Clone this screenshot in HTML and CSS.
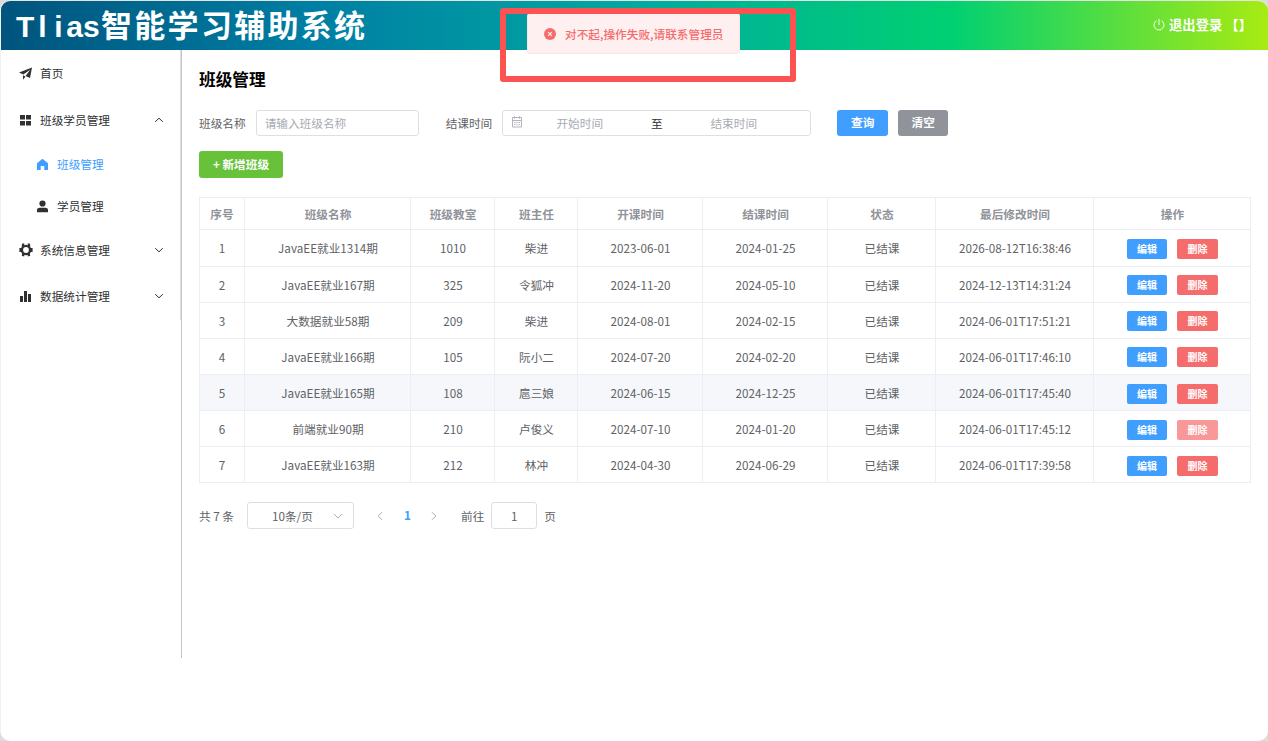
FILE: index.html
```
<!DOCTYPE html>
<html lang="zh-CN">
<head>
    <meta charset="UTF-8">
    <meta name="viewport" content="width=device-width, initial-scale=1.0">
    <title>Tlias智能学习辅助系统</title>
    <link rel="stylesheet" href="styles.css">
</head>
<body>
    <div class="window">
        <div class="header">
            <span class="title"><span class="title-en">T<span class="thin">l</span><span class="thin">i</span>as</span>智能学习辅助系统</span>
            <a class="logout">
                <svg class="power" viewBox="0 0 12 12"><path d="M3.6 1.6a5 5 0 1 0 4.8 0M6 0v6" fill="none" stroke="#fff" stroke-width="0.9"/></svg>
                <span>退出登录</span><span class="user">【】</span>
            </a>
        </div>
        <div class="container">
            <div class="aside">
                <div class="menu">
                    <div class="menu-item home">
                        <svg class="icon" viewBox="0 0 13 13"><path d="M0 5.5 13 .5 11 11 6.6 8.9 11.2 2.8 4.3 7.5zM4 8.3l2.5 1.3L4 12.8z"/></svg>
                        <span>首页</span>
                    </div>
                    <div class="menu-item">
                        <svg class="icon" viewBox="0 0 13 13"><path d="M1 1h5v4.500H1zM7 1h5v4.500H7zM1 7h5v4.500H1zM7 7h5v4.500H7z"/></svg>
                        <span>班级学员管理</span>
                        <svg class="arrow" viewBox="0 0 10 6"><path d="M1.2 4.8 5 1.2l3.8 3.6"/></svg>
                    </div>
                    <div class="menu-item sub active">
                        <svg class="icon" viewBox="0 0 13 13"><path d="M6.500.8 1 5.200V12h3.700V8h3.600v4H12V5.200z"/></svg>
                        <span>班级管理</span>
                    </div>
                    <div class="menu-item sub">
                        <svg class="icon" viewBox="0 0 13 13"><circle cx="6.5" cy="3.5" r="3.1"/><path d="M1 12.200V10c0-1.500 1.200-2.300 2.700-2.300h5.600C10.800 7.700 12 8.500 12 10v2.200z"/></svg>
                        <span>学员管理</span>
                    </div>
                    <div class="menu-item">
                        <svg class="icon gear" viewBox="0 0 14 14"><circle cx="7" cy="7" r="4.1" fill="none" stroke="#303133" stroke-width="2.4"/><path d="M8.600.6h2.300l.5 3-2.100.5zM12 5h1.600v4H12zM8.700 10.600l2-.6.5 2.700-2.400.8zM5.400.6H3.100l-.5 3 2.100.5zM2 5H.4v4H2zM5.300 10.600l-2-.6-.5 2.700 2.400.8z"/></svg>
                        <span>系统信息管理</span>
                        <svg class="arrow" viewBox="0 0 10 6"><path d="M1.2 1.2 5 4.8l3.8-3.6"/></svg>
                    </div>
                    <div class="menu-item">
                        <svg class="icon" viewBox="0 0 13 13"><path d="M1 6h3v6H1zM5 1h3v11H5zM9 4h3v8H9z"/></svg>
                        <span>数据统计管理</span>
                        <svg class="arrow" viewBox="0 0 10 6"><path d="M1.2 1.2 5 4.8l3.8-3.6"/></svg>
                    </div>
                </div>
            </div>
            <div class="main">
                <h1>班级管理</h1>
                <div class="search">
                    <label>班级名称</label>
                    <div class="input name">请输入班级名称</div>
                    <label>结课时间</label>
                    <div class="input range">
                        <svg class="calendar" viewBox="0 0 12 12"><path d="M1.500 1.500h9v9.500h-9zM1.500 4.500h9M3.500.3v2.400M8.500.3v2.400M3 6.500h1.400M5.300 6.500h1.400M7.600 6.500H9M3 8.700h1.400M5.300 8.700h1.400M7.600 8.700H9" fill="none" stroke="#a8abb2" stroke-width=".9"/></svg>
                        <span class="date">开始时间</span>
                        <span class="to">至</span>
                        <span class="date">结束时间</span>
                    </div>
                    <button class="btn primary query">查询</button>
                    <button class="btn info-btn clear">清空</button>
                </div>
                <button class="btn success">+ 新增班级</button>
                <table class="table">
                    <colgroup><col class="c1"><col class="c2"><col class="c3"><col class="c4"><col class="c5"><col class="c5"><col class="c6"><col class="c7"><col class="c8"></colgroup>
                    <thead>
                        <tr><th>序号</th><th>班级名称</th><th>班级教室</th><th>班主任</th><th>开课时间</th><th>结课时间</th><th>状态</th><th>最后修改时间</th><th>操作</th></tr>
                    </thead>
                    <tbody>
                        <tr><td>1</td><td>JavaEE就业1314期</td><td>1010</td><td>柴进</td><td>2023-06-01</td><td>2024-01-25</td><td>已结课</td><td>2026-08-12T16:38:46</td><td><div class="ops"><button class="btn small primary">编辑</button><button class="btn small danger">删除</button></div></td></tr>
                        <tr><td>2</td><td>JavaEE就业167期</td><td>325</td><td>令狐冲</td><td>2024-11-20</td><td>2024-05-10</td><td>已结课</td><td>2024-12-13T14:31:24</td><td><div class="ops"><button class="btn small primary">编辑</button><button class="btn small danger">删除</button></div></td></tr>
                        <tr><td>3</td><td>大数据就业58期</td><td>209</td><td>柴进</td><td>2024-08-01</td><td>2024-02-15</td><td>已结课</td><td>2024-06-01T17:51:21</td><td><div class="ops"><button class="btn small primary">编辑</button><button class="btn small danger">删除</button></div></td></tr>
                        <tr><td>4</td><td>JavaEE就业166期</td><td>105</td><td>阮小二</td><td>2024-07-20</td><td>2024-02-20</td><td>已结课</td><td>2024-06-01T17:46:10</td><td><div class="ops"><button class="btn small primary">编辑</button><button class="btn small danger">删除</button></div></td></tr>
                        <tr class="hover"><td>5</td><td>JavaEE就业165期</td><td>108</td><td>扈三娘</td><td>2024-06-15</td><td>2024-12-25</td><td>已结课</td><td>2024-06-01T17:45:40</td><td><div class="ops low"><button class="btn small primary">编辑</button><button class="btn small danger">删除</button></div></td></tr>
                        <tr><td>6</td><td>前端就业90期</td><td>210</td><td>卢俊义</td><td>2024-07-10</td><td>2024-01-20</td><td>已结课</td><td>2024-06-01T17:45:12</td><td><div class="ops low"><button class="btn small primary">编辑</button><button class="btn small danger light">删除</button></div></td></tr>
                        <tr><td>7</td><td>JavaEE就业163期</td><td>212</td><td>林冲</td><td>2024-04-30</td><td>2024-06-29</td><td>已结课</td><td>2024-06-01T17:39:58</td><td><div class="ops low"><button class="btn small primary">编辑</button><button class="btn small danger">删除</button></div></td></tr>
                    </tbody>
                </table>
                <div class="pagination">
                    <span class="total">共 7 条</span>
                    <div class="select">
                        <span>10条/页</span>
                        <svg class="arrow grey" viewBox="0 0 10 6"><path d="M1 1l4 4 4-4"/></svg>
                    </div>
                    <svg class="page-arrow" viewBox="0 0 6 10"><path d="M5 1.2 1.2 5 5 8.8"/></svg>
                    <span class="page">1</span>
                    <svg class="page-arrow" viewBox="0 0 6 10"><path d="M1 1.2 4.8 5 1 8.8"/></svg>
                    <span class="goto">前往</span>
                    <div class="input jump">1</div>
                    <span>页</span>
                </div>
            </div>
        </div>
    </div>
    <div class="message">
        <svg class="close-icon" viewBox="0 0 12 12"><circle cx="6" cy="6" r="6" fill="#f56c6c"/><path d="m4.2 4.2 3.6 3.6m0-3.6L4.2 7.8" stroke="#fef0f0" stroke-width="1.1"/></svg>
        <span>对不起,操作失败,请联系管理员</span>
    </div>
    <div class="mark"></div>
</body>
</html>
```
FILE: styles.css
```
* {
    box-sizing: border-box;
}

body {
    margin: 0;
    height: 741px;
    overflow: hidden;
    position: relative;
    background: #dcdcdc;
    font-family: "Noto Sans CJK SC", sans-serif;
    font-size: 11.67px;
    color: #606266;
}

svg {
    display: block;
    flex: none;
}

.window {
    height: 741px;
    border-top: 1px solid #e4e4e4;
    border-left: 1px solid #f0f0f0;
    border-radius: 10px;
    background: #fff;
    overflow: hidden;
}

.header {
    height: 49px;
    display: flex;
    align-items: center;
    justify-content: space-between;
    padding: 0 16px 0 15px;
    background: linear-gradient(to right, #00547d, #007fa4, #00aaa0, #00d072, #a8eb12);
    color: #fff;
}

.title {
    height: 49px;
    font-family: "KaiTi", "STKaiti", "Noto Sans CJK SC", sans-serif;
    font-size: 31px;
    font-weight: bold;
    line-height: 45px;
    letter-spacing: 2.3px;
    white-space: nowrap;
}

.title-en {
    display: inline-block;
    width: 85px;
    font-family: "Liberation Sans", sans-serif;
    font-size: 30px;
    letter-spacing: 0;
}

.thin {
    display: inline-block;
    width: 16px;
    text-align: center;
}

.logout {
    display: flex;
    align-items: center;
    height: 47px;
    margin-bottom: 2px;
    font-size: 13.33px;
    font-weight: bold;
}

.power {
    width: 12px;
    height: 12px;
    margin-right: 4px;
}

.user {
    margin-left: 3px;
}

.container {
    display: flex;
}

.aside {
    width: 181px;
    height: 608px;
    border-right: 1px solid #c4c4c4;
}

.menu {
    height: 270px;
    border-right: 1px solid #dcdfe6;
}

.menu-item {
    display: flex;
    align-items: center;
    height: 46px;
    padding: 0 16px 0 18px;
    color: #303133;
}

.menu-item span {
    padding-bottom: 2px;
}

.menu-item .icon {
    width: 13px;
    height: 13px;
    margin-right: 8px;
    fill: currentColor;
}

.menu-item.home {
    height: 47px;
}

.menu-item .gear {
    width: 14px;
    height: 14px;
    margin-right: 7px;
}

.menu-item.sub {
    height: 42px;
    padding-left: 35px;
}

.menu-item.active {
    color: #409eff;
}

.arrow {
    width: 10px;
    height: 6px;
    margin-left: auto;
    fill: none;
    stroke: #303133;
}

.main {
    width: 1070px;
    padding: 15px 0 0 17px;
}

h1 {
    margin: 0;
    font-size: 16.67px;
    line-height: 28px;
    color: #000;
}

.search {
    display: flex;
    align-items: center;
    height: 27px;
    margin-top: 16px;
}

.input {
    display: flex;
    align-items: center;
    height: 27px;
    border: 1px solid #dcdfe6;
    border-radius: 3px;
    color: #a8abb2;
}

.search .input {
    height: 26px;
    margin-top: 1px;
    padding-bottom: 2px;
}

.search .name {
    width: 163px;
    margin-left: 10px;
    margin-right: 27px;
    padding-left: 8px;
}

.search .range {
    width: 309px;
    margin-left: 10px;
    padding-left: 8px;
}

.calendar {
    width: 12px;
    height: 12px;
}

.date {
    width: 113px;
    text-align: center;
}

.to {
    width: 41px;
    text-align: center;
    color: #303133;
}

.btn {
    display: block;
    border: none;
    border-radius: 3px;
    padding: 0;
    font-family: inherit;
    font-size: 11.67px;
    font-weight: bold;
    color: #fff;
}

.query {
    width: 51px;
    height: 26px;
    margin-left: 26px;
    padding-bottom: 2px;
}

.clear {
    width: 50px;
    height: 26px;
    margin-left: 10px;
    padding-bottom: 2px;
}

.primary {
    background: #409eff;
}

.info-btn {
    background: #909399;
}

.success {
    width: 84px;
    height: 27px;
    margin-top: 15px;
    padding-bottom: 2px;
    background: #67c23a;
}

.danger {
    background: #f56c6c;
}

.danger.light {
    background: #f89898;
}

.small {
    width: 40px;
    height: 20px;
    border-radius: 2px;
    font-size: 10px;
    line-height: 20px;
}

.small.danger {
    width: 41px;
}

.table {
    table-layout: fixed;
    width: 1052px;
    margin-top: 19px;
    border-top: 1px solid #ebeef5;
    border-left: 1px solid #ebeef5;
    border-collapse: separate;
    border-spacing: 0;
    text-align: center;
}

.c1 { width: 45px; }
.c2 { width: 166px; }
.c3 { width: 84px; }
.c4 { width: 83px; }
.c5 { width: 125px; }
.c6 { width: 108px; }
.c7 { width: 158px; }
.c8 { width: 157px; }

.table th, .table td {
    height: 36px;
    padding: 0 0 0 1px;
    border-right: 1px solid #ebeef5;
    border-bottom: 1px solid #ebeef5;
    line-height: 19px;
}

.table th:first-child, .table td:first-child {
    padding-left: 0;
}

.table th {
    height: 32px;
    color: #909399;
}

.table tbody tr:first-child td {
    height: 37px;
    padding-bottom: 2px;
}

.table tbody tr:first-child td:last-child {
    padding-top: 2px;
    padding-bottom: 0;
}

.table .hover td {
    background: #f5f7fa;
}

.ops {
    display: flex;
    justify-content: center;
    gap: 10px;
}

.ops.low {
    padding-top: 2px;
}

.pagination {
    display: flex;
    align-items: center;
    height: 27px;
    margin-top: 19px;
}

.total {
    width: 48px;
}

.select {
    display: flex;
    align-items: center;
    width: 107px;
    height: 27px;
    padding: 0 10px 0 24px;
    border: 1px solid #dcdfe6;
    border-radius: 3px;
}

.arrow.grey {
    stroke: #a8abb2;
}

.page-arrow {
    width: 6px;
    height: 10px;
    margin-left: 23px;
    fill: none;
    stroke: #a8abb2;
}

.page {
    width: 7px;
    margin-left: 21px;
    padding-bottom: 2px;
    font-weight: bold;
    color: #409eff;
}

.page + .page-arrow {
    margin-left: 20px;
}

.goto {
    margin-left: 24px;
}

.jump {
    width: 46px;
    justify-content: center;
    margin: 0 7px;
    padding-bottom: 1px;
    color: #606266;
}

.message {
    position: absolute;
    left: 527px;
    top: 13px;
    display: flex;
    align-items: center;
    width: 213px;
    height: 41px;
    padding-left: 16px;
    background: #fef0f0;
    border: 1px solid #fde2e2;
    border-radius: 3px;
    color: #f56c6c;
    font-weight: 500;
    white-space: nowrap;
}

.close-icon {
    width: 12px;
    height: 12px;
    margin-right: 9px;
}

/* red highlight around the error message */
.mark {
    position: absolute;
    left: 500px;
    top: 8px;
    width: 296px;
    height: 74px;
    border: 6px solid #fc5252;
    border-radius: 3px;
}
```
